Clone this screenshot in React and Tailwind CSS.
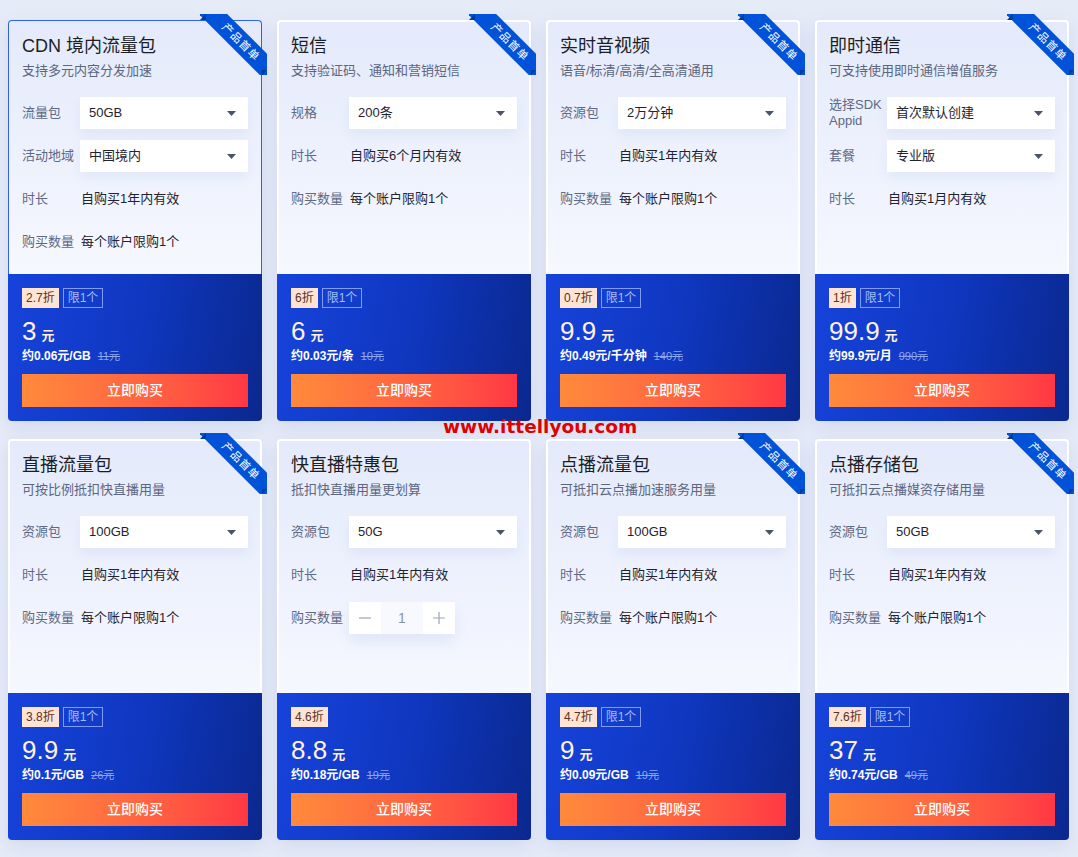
import React from "react";

const FONT = { fontFamily: '"Liberation Sans", "Noto Sans CJK SC", sans-serif' };

const cards = [
  {
    title: "CDN 境内流量包",
    sub: "支持多元内容分发加速",
    active: true,
    ribbon: true,
    rows: [
      { label: "流量包", select: "50GB" },
      { label: "活动地域", select: "中国境内" },
      { label: "时长", text: "自购买1年内有效" },
      { label: "购买数量", text: "每个账户限购1个" },
    ],
    discount: "2.7折",
    limit: true,
    price: "3",
    unit: "约0.06元/GB",
    orig: "11元",
  },
  {
    title: "短信",
    sub: "支持验证码、通知和营销短信",
    ribbon: true,
    rows: [
      { label: "规格", select: "200条" },
      { label: "时长", text: "自购买6个月内有效" },
      { label: "购买数量", text: "每个账户限购1个" },
    ],
    discount: "6折",
    limit: true,
    price: "6",
    unit: "约0.03元/条",
    orig: "10元",
  },
  {
    title: "实时音视频",
    sub: "语音/标清/高清/全高清通用",
    ribbon: true,
    rows: [
      { label: "资源包", select: "2万分钟" },
      { label: "时长", text: "自购买1年内有效" },
      { label: "购买数量", text: "每个账户限购1个" },
    ],
    discount: "0.7折",
    limit: true,
    price: "9.9",
    unit: "约0.49元/千分钟",
    orig: "140元",
  },
  {
    title: "即时通信",
    sub: "可支持使用即时通信增值服务",
    ribbon: true,
    rows: [
      { label: "选择SDK Appid", select: "首次默认创建" },
      { label: "套餐", select: "专业版" },
      { label: "时长", text: "自购买1月内有效" },
    ],
    discount: "1折",
    limit: true,
    price: "99.9",
    unit: "约99.9元/月",
    orig: "990元",
  },
  {
    title: "直播流量包",
    sub: "可按比例抵扣快直播用量",
    ribbon: true,
    rows: [
      { label: "资源包", select: "100GB" },
      { label: "时长", text: "自购买1年内有效" },
      { label: "购买数量", text: "每个账户限购1个" },
    ],
    discount: "3.8折",
    limit: true,
    price: "9.9",
    unit: "约0.1元/GB",
    orig: "26元",
  },
  {
    title: "快直播特惠包",
    sub: "抵扣快直播用量更划算",
    ribbon: false,
    rows: [
      { label: "资源包", select: "50G" },
      { label: "时长", text: "自购买1年内有效" },
      { label: "购买数量", stepper: true },
    ],
    discount: "4.6折",
    limit: false,
    price: "8.8",
    unit: "约0.18元/GB",
    orig: "19元",
  },
  {
    title: "点播流量包",
    sub: "可抵扣云点播加速服务用量",
    ribbon: true,
    rows: [
      { label: "资源包", select: "100GB" },
      { label: "时长", text: "自购买1年内有效" },
      { label: "购买数量", text: "每个账户限购1个" },
    ],
    discount: "4.7折",
    limit: true,
    price: "9",
    unit: "约0.09元/GB",
    orig: "19元",
  },
  {
    title: "点播存储包",
    sub: "可抵扣云点播媒资存储用量",
    ribbon: true,
    rows: [
      { label: "资源包", select: "50GB" },
      { label: "时长", text: "自购买1年内有效" },
      { label: "购买数量", text: "每个账户限购1个" },
    ],
    discount: "7.6折",
    limit: true,
    price: "37",
    unit: "约0.74元/GB",
    orig: "49元",
  },
];

function Ribbon() {
  return (
    <div className="absolute top-[-6px] right-[-5px] w-[67px] h-[61px] overflow-hidden pointer-events-none">
      <div className="absolute left-[-9px] top-[18px] w-[100px] h-[20px] rotate-45 bg-[#0052d9] text-white text-[11px] leading-[20px] text-center tracking-[1px]">
        产品首单
      </div>
      <div className="absolute left-0 top-0 w-0 h-0 border-t-[6px] border-t-transparent border-r-[6px] border-r-[#003a9e]" />
      <div className="absolute right-0 bottom-0 w-0 h-0 border-l-[5px] border-l-[#003a9e] border-b-[5px] border-b-transparent" />
    </div>
  );
}

function Caret() {
  return (
    <svg width="9" height="5" viewBox="0 0 9 5" className="shrink-0">
      <path d="M0 0 L9 0 L4.5 5 Z" fill="#4b5466" />
    </svg>
  );
}

function Row({ row }) {
  return (
    <div className="flex items-center h-[32px]">
      <div className="w-[58px] shrink-0 text-[13px] leading-[16px] text-[#5d6985]">{row.label}</div>
      {row.select && (
        <div className="w-[168px] h-[32px] bg-white flex items-center justify-between pl-[9px] pr-[12px] shadow-[0_6px_12px_rgba(80,110,190,0.08)]">
          <span className="text-[13px] text-[#1f2330]">{row.select}</span>
          <Caret />
        </div>
      )}
      {row.text && <div className="pl-[1px] text-[13px] text-[#1f2330]">{row.text}</div>}
      {row.stepper && (
        <div className="flex h-[32px] shadow-[0_8px_14px_rgba(80,110,190,0.10)]">
          <div className="w-[32px] h-[32px] bg-white flex items-center justify-center">
            <svg width="12" height="12" viewBox="0 0 12 12"><path d="M0 6 H12" stroke="#9aa3b5" strokeWidth="1.2" /></svg>
          </div>
          <div className="w-[42px] h-[32px] bg-[#f7f9ff] flex items-center justify-center text-[14px] text-[#8a93a6]">1</div>
          <div className="w-[32px] h-[32px] bg-white flex items-center justify-center">
            <svg width="12" height="12" viewBox="0 0 12 12"><path d="M0 6 H12 M6 0 V12" stroke="#9aa3b5" strokeWidth="1.2" /></svg>
          </div>
        </div>
      )}
    </div>
  );
}

function Card({ c }) {
  return (
    <div className="relative w-[254px] h-[401px] flex flex-col rounded-[4px] shadow-[0_6px_18px_rgba(70,100,180,0.13)]">
      <div
        className={
          "h-[254px] rounded-t-[4px] border-b-0 bg-gradient-to-b from-[#e4eafb] to-[#f6f8ff] " +
          (c.active
            ? "border border-[#2f63e4] pt-[12px] px-[13px]"
            : "border-2 border-white pt-[11px] px-[12px]")
        }
      >
        <div className="text-[18px] leading-[26px] text-[#1b1e26]">{c.title}</div>
        <div className="mt-[2px] text-[13px] leading-[20px] text-[#5b6680]">{c.sub}</div>
        <div className="mt-[16px] flex flex-col gap-[11px]">
          {c.rows.map((r, i) => (
            <Row key={i} row={r} />
          ))}
        </div>
      </div>
      <div className="h-[147px] rounded-b-[4px] px-[14px] pt-[14px] bg-[linear-gradient(100deg,#1643db_0%,#0f37c0_50%,#0a288e_100%)]">
        <div className="flex gap-[4px] h-[20px]">
          <div className="h-[20px] px-[4px] bg-[#ffe4d3] text-[#5a3125] text-[12px] leading-[20px]">{c.discount}</div>
          {c.limit && (
            <div className="h-[20px] px-[4px] border border-[#7f9cf2] text-[#a8bdf7] text-[12px] leading-[18px]">限1个</div>
          )}
        </div>
        <div className="mt-[6px] h-[34px] flex items-baseline text-[#fff1de]">
          <span className="text-[26px] leading-[34px]">{c.price}</span>
          <span className="ml-[5px] text-[13px] font-bold">元</span>
        </div>
        <div className="h-[16px] flex items-center text-[12px] leading-[16px]">
          <span className="text-white font-bold">{c.unit}</span>
          <span className="ml-[7px] text-[11px] text-[#8ea6ee] line-through">{c.orig}</span>
        </div>
        <div className="mt-[10px] h-[33px] bg-gradient-to-r from-[#ff8a3b] to-[#ff3744] flex items-center justify-center text-white text-[14px] font-medium">
          立即购买
        </div>
      </div>
      {c.ribbon && <Ribbon />}
    </div>
  );
}

export default function App() {
  return (
    <div className="relative w-[1078px] h-[857px] bg-[#e6ebf8] overflow-hidden" style={FONT}>
      <div className="pt-[20px] pl-[8px] grid grid-cols-[repeat(4,254px)] gap-x-[15px] gap-y-[18px]">
        {cards.map((c, i) => (
          <Card key={i} c={c} />
        ))}
      </div>
      <div
        className="absolute left-[443px] top-[415px] text-[18.5px] font-bold text-[#e00000] leading-[24px]"
        style={{ fontFamily: '"DejaVu Sans", sans-serif' }}
      >
        www.ittellyou.com
      </div>
    </div>
  );
}
